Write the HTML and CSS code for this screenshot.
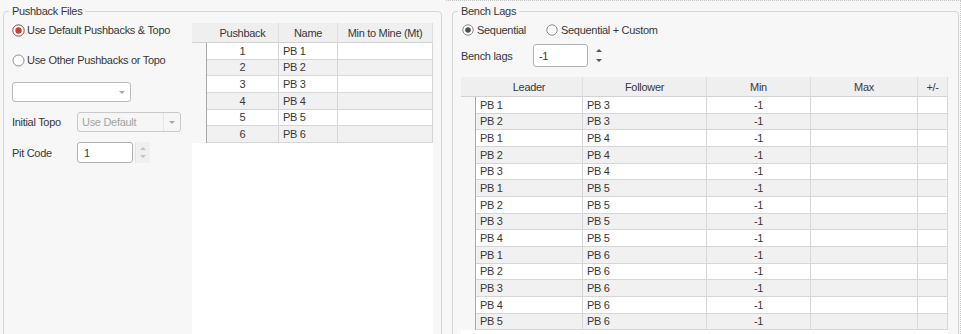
FILE: index.html
```html
<!DOCTYPE html>
<html>
<head>
<meta charset="utf-8">
<link rel="stylesheet" href="styles.css">
</head>
<body>
<div class="page">
  <fieldset class="group group-left">
    <legend>Pushback Files</legend>
    <div class="left-inner">
      <div class="controls">
        <div class="radio-row r1">
          <svg class="radio" width="13" height="13" viewBox="0 0 13 13"><circle cx="6.5" cy="6.5" r="5.7" fill="#fff" stroke="#7a4a44" stroke-width="1"/><circle cx="6.5" cy="6.5" r="3.2" fill="#c9402d"/></svg>
          <span>Use Default Pushbacks &amp; Topo</span>
        </div>
        <div class="radio-row r2">
          <svg class="radio" width="13" height="13" viewBox="0 0 13 13"><circle cx="6.5" cy="6.5" r="5.5" fill="#fff" stroke="#8c8c8c" stroke-width="1"/></svg>
          <span>Use Other Pushbacks or Topo</span>
        </div>
        <div class="combo combo-file"><span class="combo-text"></span><span class="combo-btn"><i class="tri-down light"></i></span></div>
        <div class="field-row topo">
          <span class="lbl">Initial Topo</span>
          <div class="combo combo-topo disabled"><span class="combo-text">Use Default</span><span class="combo-btn sep"><i class="tri-down light"></i></span></div>
        </div>
        <div class="field-row pit">
          <span class="lbl">Pit Code</span>
          <div class="input pit-input">1</div>
          <div class="spin spin-pit"><i class="tri-up faint"></i><i class="tri-down faint"></i></div>
        </div>
      </div>
      <div class="grid grid-left">
        <div class="row head">
          <div class="c rh"></div><div class="c ctr">Pushback</div><div class="c ctr">Name</div><div class="c ctr">Min to Mine (Mt)</div>
        </div>
        <div class="row"><div class="c rh"></div><div class="c ctr">1</div><div class="c">PB 1</div><div class="c"></div></div>
        <div class="row alt"><div class="c rh"></div><div class="c ctr">2</div><div class="c">PB 2</div><div class="c"></div></div>
        <div class="row"><div class="c rh"></div><div class="c ctr">3</div><div class="c">PB 3</div><div class="c"></div></div>
        <div class="row alt"><div class="c rh"></div><div class="c ctr">4</div><div class="c">PB 4</div><div class="c"></div></div>
        <div class="row"><div class="c rh"></div><div class="c ctr">5</div><div class="c">PB 5</div><div class="c"></div></div>
        <div class="row alt"><div class="c rh"></div><div class="c ctr">6</div><div class="c">PB 6</div><div class="c"></div></div>
      </div>
    </div>
  </fieldset>

  <div class="focus-wrap">
    <fieldset class="group group-right">
      <legend>Bench Lags</legend>
      <div class="right-inner">
        <div class="radio-row opts">
          <label class="opt opt1">
            <svg class="radio" width="12" height="12" viewBox="0 0 12 12"><circle cx="6" cy="6" r="5.2" fill="#fff" stroke="#8a8a8a" stroke-width="1"/><circle cx="6" cy="6" r="2.8" fill="#505050"/></svg>
            <span>Sequential</span>
          </label>
          <label class="opt">
            <svg class="radio" width="12" height="12" viewBox="0 0 12 12"><circle cx="6" cy="6" r="5.2" fill="#fff" stroke="#8a8a8a" stroke-width="1"/></svg>
            <span>Sequential + Custom</span>
          </label>
        </div>
        <div class="field-row lags">
          <span class="lbl lbl-lags">Bench lags</span>
          <div class="input lags-input">-1</div>
          <div class="spin spin-lags"><i class="tri-up dark"></i><i class="tri-down dark"></i></div>
        </div>
        <div class="grid grid-right">
          <div class="row head">
            <div class="c rh"></div><div class="c ctr">Leader</div><div class="c ctr">Follower</div><div class="c ctr">Min</div><div class="c ctr">Max</div><div class="c ctr">+/-</div>
          </div>
          <div class="row"><div class="c rh"></div><div class="c">PB 1</div><div class="c">PB 3</div><div class="c ctr">-1</div><div class="c"></div><div class="c"></div></div>
          <div class="row alt"><div class="c rh"></div><div class="c">PB 2</div><div class="c">PB 3</div><div class="c ctr">-1</div><div class="c"></div><div class="c"></div></div>
          <div class="row"><div class="c rh"></div><div class="c">PB 1</div><div class="c">PB 4</div><div class="c ctr">-1</div><div class="c"></div><div class="c"></div></div>
          <div class="row alt"><div class="c rh"></div><div class="c">PB 2</div><div class="c">PB 4</div><div class="c ctr">-1</div><div class="c"></div><div class="c"></div></div>
          <div class="row"><div class="c rh"></div><div class="c">PB 3</div><div class="c">PB 4</div><div class="c ctr">-1</div><div class="c"></div><div class="c"></div></div>
          <div class="row alt"><div class="c rh"></div><div class="c">PB 1</div><div class="c">PB 5</div><div class="c ctr">-1</div><div class="c"></div><div class="c"></div></div>
          <div class="row"><div class="c rh"></div><div class="c">PB 2</div><div class="c">PB 5</div><div class="c ctr">-1</div><div class="c"></div><div class="c"></div></div>
          <div class="row alt"><div class="c rh"></div><div class="c">PB 3</div><div class="c">PB 5</div><div class="c ctr">-1</div><div class="c"></div><div class="c"></div></div>
          <div class="row"><div class="c rh"></div><div class="c">PB 4</div><div class="c">PB 5</div><div class="c ctr">-1</div><div class="c"></div><div class="c"></div></div>
          <div class="row alt"><div class="c rh"></div><div class="c">PB 1</div><div class="c">PB 6</div><div class="c ctr">-1</div><div class="c"></div><div class="c"></div></div>
          <div class="row"><div class="c rh"></div><div class="c">PB 2</div><div class="c">PB 6</div><div class="c ctr">-1</div><div class="c"></div><div class="c"></div></div>
          <div class="row alt"><div class="c rh"></div><div class="c">PB 3</div><div class="c">PB 6</div><div class="c ctr">-1</div><div class="c"></div><div class="c"></div></div>
          <div class="row"><div class="c rh"></div><div class="c">PB 4</div><div class="c">PB 6</div><div class="c ctr">-1</div><div class="c"></div><div class="c"></div></div>
          <div class="row alt"><div class="c rh"></div><div class="c">PB 5</div><div class="c">PB 6</div><div class="c ctr">-1</div><div class="c"></div><div class="c"></div></div>
        </div>
      </div>
    </fieldset>
  </div>
</div>
</body>
</html>
```

FILE: styles.css
```css
* { box-sizing: border-box; }

html, body {
  margin: 0;
  padding: 0;
}

body {
  width: 961px;
  height: 334px;
  overflow: hidden;
  background: #f7f7f7;
  font-family: "Liberation Sans", Arial, sans-serif;
  font-size: 11px;
  letter-spacing: -0.3px;
  color: #383838;
}

.page {
  display: flex;
  align-items: flex-start;
  padding-left: 3px;
  height: 334px;
  overflow: hidden;
}

.group {
  margin: 0;
  padding: 0;
  min-width: 0;
  border: 1px solid #d6d6d6;
  border-radius: 4px;
  height: 420px;
}

.group legend {
  margin-left: 5px;
  padding: 0 3px;
  line-height: 15px;
  font-size: 11px;
  color: #383838;
}

.group-left {
  width: 439px;
  margin-top: 4px;
}

.left-inner {
  display: flex;
  align-items: flex-start;
  padding-left: 8px;
}

.controls {
  width: 180px;
  flex: none;
  display: flex;
  flex-direction: column;
}

.radio-row {
  display: flex;
  align-items: center;
  height: 20px;
  gap: 2px;
  white-space: nowrap;
}

.radio { display: block; flex: none; }

.r1 { margin-top: 1px; }
.r2 { margin-top: 10px; }

.combo {
  display: flex;
  align-items: center;
  height: 20px;
  border: 1px solid #b9b9b9;
  border-radius: 3px;
  background: #fff;
}

.combo-text {
  flex: 1;
  padding-left: 4px;
  white-space: nowrap;
}

.combo-btn {
  width: 17px;
  height: 100%;
  display: flex;
  align-items: center;
  justify-content: center;
}

.combo-btn.sep { border-left: 1px solid #e6e6e6; }

.combo-file {
  width: 119px;
  margin-top: 12px;
}

.combo.disabled {
  background: #f6f6f6;
  border-color: #c9c9c9;
  color: #a3a3a3;
}

.field-row {
  display: flex;
  align-items: center;
}

.lbl { width: 65px; flex: none; white-space: nowrap; }

.topo { margin-top: 10px; height: 20px; }
.combo-topo { width: 104px; }

.pit { margin-top: 10px; height: 21px; }

.input {
  height: 100%;
  border: 1px solid #b0b0b0;
  border-radius: 3px;
  background: #fff;
  padding-left: 6px;
  display: flex;
  align-items: center;
}

.pit-input { width: 56px; }

.spin {
  display: flex;
  flex-direction: column;
  align-items: center;
  justify-content: space-around;
  height: 100%;
}

.spin-pit {
  width: 15px;
  margin-left: 2px;
  background: #f0f0f0;
  border-left: 1px solid #e2e2e2;
  padding: 3px 0;
}

.tri-down, .tri-up {
  display: block;
  width: 0;
  height: 0;
  border-left: 3px solid transparent;
  border-right: 3px solid transparent;
}

.tri-down { border-top: 3px solid #aaa; }
.tri-up { border-bottom: 3px solid #aaa; }

.tri-down.light { border-top-color: #a8a8a8; }
.tri-down.faint { border-top-color: #c4c4c4; }
.tri-up.faint { border-bottom-color: #c4c4c4; }
.tri-down.dark { border-top-color: #555; }
.tri-up.dark { border-bottom-color: #555; }

/* grids */
.grid {
  background: #fff;
  display: flex;
  flex-direction: column;
  height: 420px;
}

.grid-left {
  width: 241px;
  flex: none;
  margin-top: 4px;
}

.row {
  display: grid;
  height: 16.6667px;
  background: #fff;
  flex: none;
}

.row.alt { background: #f1f1f1; }

.grid-left .row { grid-template-columns: 15px 72px 59px 95px; }
.grid-right .row { grid-template-columns: 15px 107px 124px 104px 107px 30px; }

.row.head {
  height: 20px;
  background: #efefef;
}

.c {
  border-right: 1px solid #d6d6d6;
  border-bottom: 1px solid #d6d6d6;
  padding: 0 4px;
  white-space: nowrap;
  overflow: hidden;
  display: flex;
  align-items: center;
  line-height: 14px;
}

.c.ctr { justify-content: center; padding: 0; }

.row .c.rh {
  background: #f7f7f7;
  border-right: 1px solid #a9a9a9;
  border-bottom: none;
}

.row.head .c {
  border-right: 1px solid #dedede;
  border-bottom: 1px solid #d2d2d2;
}

.row.head .c.rh {
  background: #efefef;
  border-right: none;
  border-bottom: 1px solid #d2d2d2;
}

/* right side */
.focus-wrap {
  margin-left: 4px;
  width: 515px;
  flex: none;
  height: 334px;
  border-top: 1px dotted #c4c4c4;
  border-right: 1px dotted #c4c4c4;
  padding-left: 6px;
}

.group-right {
  width: 507px;
  margin-top: 3px;
}

.right-inner {
  padding-left: 8px;
  display: flex;
  flex-direction: column;
}

.opts { margin-top: 1px; gap: 0; }

.opt {
  display: flex;
  align-items: center;
  gap: 3px;
}

.opt1 { width: 85px; padding-left: 1px; }

.lags { margin-top: 4px; height: 23px; }
.lbl-lags { width: 72px; }
.lags-input { width: 55px; padding-left: 5px; }

.spin-lags {
  width: 16px;
  margin-left: 3px;
  padding: 5px 0;
  justify-content: space-between;
}

.grid-right {
  width: 487px;
  margin-top: 10px;
}
```
